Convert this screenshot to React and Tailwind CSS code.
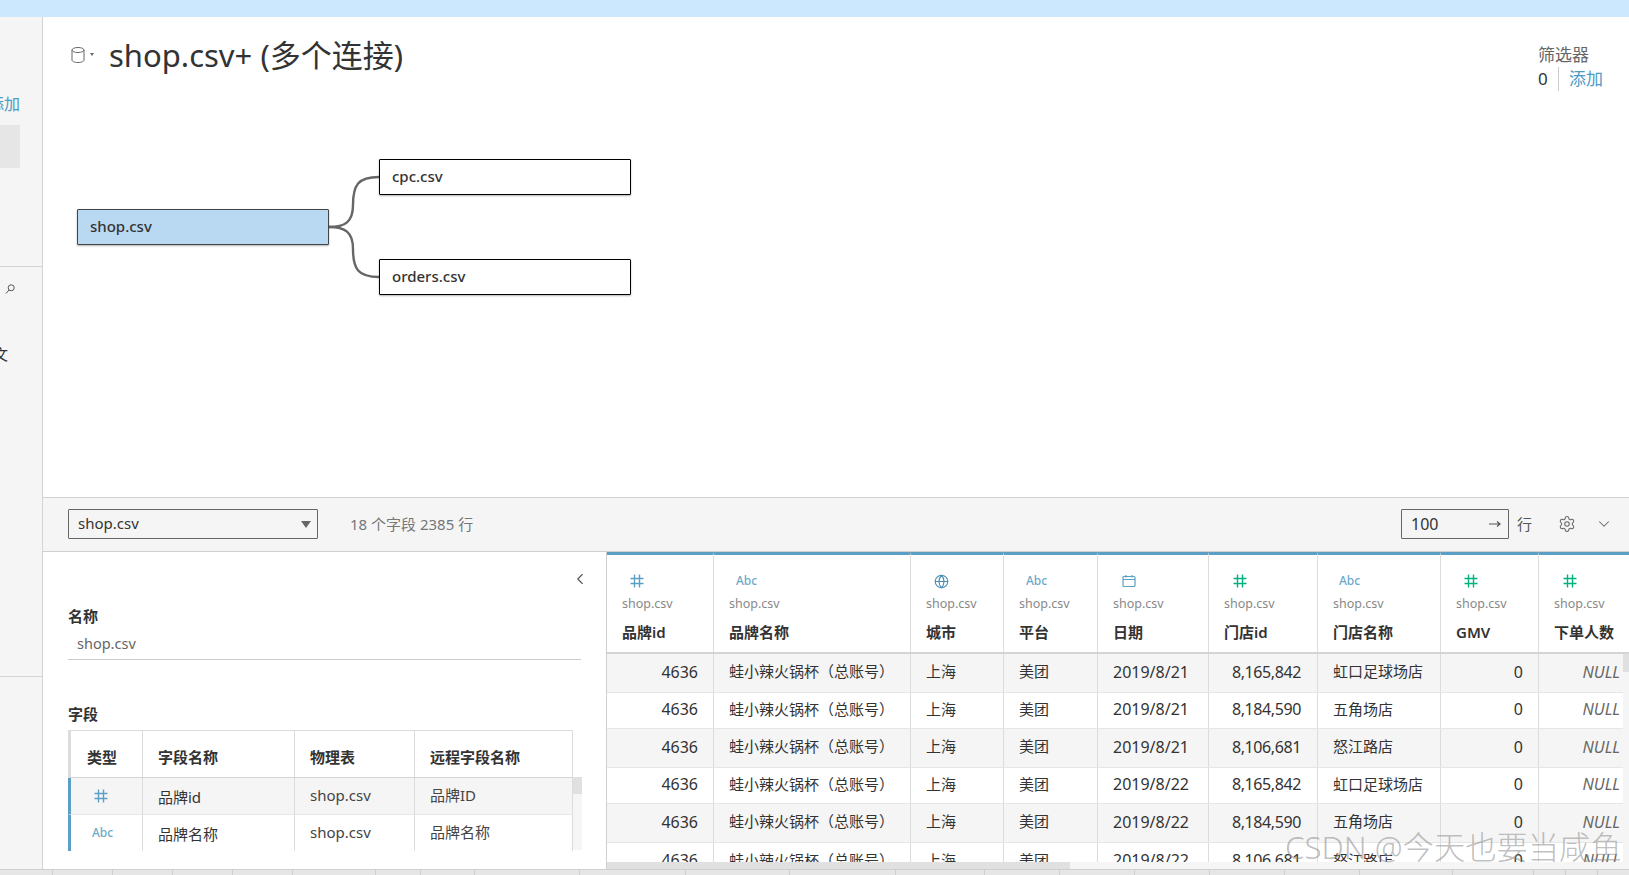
import { Globe, Settings, ChevronDown, ChevronLeft } from 'lucide-react';

const HashIcon = ({ className }) => (
  <svg viewBox="0 0 14 14" className={className} fill="none" stroke="currentColor" strokeWidth="1.4">
    <path d="M4.5 0.5v13M9.5 0.5v13M0.5 4.5h13M0.5 9.5h13" />
  </svg>
);

const CalendarIcon = ({ className }) => (
  <svg viewBox="0 0 14 14" className={className} fill="none" stroke="currentColor" strokeWidth="1.2">
    <rect x="1" y="2.5" width="12" height="10" rx="1" />
    <path d="M1 5.5h12M4 1v2.5M10 1v2.5" />
  </svg>
);

const AbcIcon = ({ className }) => <span className={className}>Abc</span>;

const columns = [
  { w: 'w-[107px]', name: '品牌id', icon: 'hash', color: 'text-[#5b9fc4]', iconPad: 'pl-[23px]', align: 'right', pad: 'pr-[15px]' },
  { w: 'w-[197px]', name: '品牌名称', icon: 'abc', color: 'text-[#5b9fc4]', iconPad: 'pl-[22px]' },
  { w: 'w-[93px]', name: '城市', icon: 'globe', color: 'text-[#4a8fb5]', iconPad: 'pl-[23px]' },
  { w: 'w-[94px]', name: '平台', icon: 'abc', color: 'text-[#5b9fc4]', iconPad: 'pl-[22px]' },
  { w: 'w-[111px]', name: '日期', icon: 'calendar', color: 'text-[#5b9fc4]', iconPad: 'pl-[24px]' },
  { w: 'w-[109px]', name: '门店id', icon: 'hash', color: 'text-[#00b180]', iconPad: 'pl-[24px]', align: 'right', pad: 'pr-[16px]' },
  { w: 'w-[123px]', name: '门店名称', icon: 'abc', color: 'text-[#5b9fc4]', iconPad: 'pl-[21px]' },
  { w: 'w-[98px]', name: 'GMV', icon: 'hash', color: 'text-[#00b180]', iconPad: 'pl-[23px]', align: 'right', pad: 'pr-[15px]' },
  { w: 'w-[84px]', name: '下单人数', icon: 'hash', color: 'text-[#00b180]', iconPad: 'pl-[24px]', align: 'right', pad: 'pr-[3px]' },
];

const rows = [
  { h: 'h-[39px]', bg: 'bg-[#f5f5f5]', date: '2019/8/21', id: '8,165,842', store: '虹口足球场店' },
  { h: 'h-[36px]', bg: 'bg-white', date: '2019/8/21', id: '8,184,590', store: '五角场店' },
  { h: 'h-[39px]', bg: 'bg-[#f5f5f5]', date: '2019/8/21', id: '8,106,681', store: '怒江路店' },
  { h: 'h-[36px]', bg: 'bg-white', date: '2019/8/22', id: '8,165,842', store: '虹口足球场店' },
  { h: 'h-[39px]', bg: 'bg-[#f5f5f5]', date: '2019/8/22', id: '8,184,590', store: '五角场店' },
  { h: 'h-[38px]', bg: 'bg-white', date: '2019/8/22', id: '8,106,681', store: '怒江路店' },
];

const bottomTabs = ['w-[53px]', 'w-[60px]', 'w-[60px]', 'w-[60px]', 'w-[60px]', 'w-[83px]', 'w-[45px]', 'w-[54px]', 'w-[105px]', 'w-[106px]', 'w-[104px]', 'w-[106px]', 'w-[89px]', 'w-[75px]', 'w-[75px]', 'w-[75px]', 'w-[75px]', 'w-[75px]', 'w-[93px]', 'w-[81px]', 'w-[32px]', 'w-[32px]', 'w-[32px]'];

const cjkCells = [1, 2, 3, 6];

const ColumnIcon = ({ type }) => {
  if (type === 'hash') return <HashIcon className="w-[14px] h-[14px]" />;
  if (type === 'globe') return <Globe className="w-[15px] h-[15px]" strokeWidth={1.8} />;
  if (type === 'calendar') return <CalendarIcon className="w-[14px] h-[14px]" />;
  return <AbcIcon className="text-[12px] leading-[14px] font-medium opacity-90" />;
};

const DataRow = ({ row }) => {
  const cells = ['4636', '蛙小辣火锅杯（总账号）', '上海', '美团', row.date, row.id, row.store, '0', 'NULL'];
  return (
    <div className={`flex shrink-0 border-b border-[#e6e6e6] ${row.h} ${row.bg}`}>
      {cells.map((text, i) => {
        const col = columns[i];
        const right = col.align === 'right';
        return (
          <div
            key={i}
            className={`${col.w} shrink-0 flex items-center pb-[3px] border-r border-[#dcdcdc] last:border-r-0 ${right ? `justify-end ${col.pad}` : 'pl-[15px]'} ${text === 'NULL' ? 'italic text-[#666]' : 'text-[#333]'} ${cjkCells.includes(i) ? 'text-[15px]' : 'text-[16px]'} ${i === 5 ? 'tracking-[-0.4px]' : ''} whitespace-nowrap`}
          >
            {text}
          </div>
        );
      })}
    </div>
  );
};

const Sidebar = () => (
  <div className="w-[43px] shrink-0 bg-[#f5f5f5] border-r border-[#d4d4d4] flex flex-col overflow-hidden">
    <div className="h-[250px] shrink-0 border-b border-[#d4d4d4]">
      <div className="w-[20px] mt-[75px] h-[24px] flex justify-end overflow-hidden">
        <span className="text-[16px] leading-[24px] text-[#4a9cc4] whitespace-nowrap">添加</span>
      </div>
      <div className="w-[20px] h-[43px] mt-[9px] bg-[#e6e6e6]" />
    </div>
    <div className="h-[410px] shrink-0 border-b border-[#d4d4d4]">
      <svg viewBox="0 0 10 10" className="w-[10px] h-[10px] ml-[5px] mt-[17px] text-[#555]" fill="none" stroke="currentColor" strokeWidth="1">
        <circle cx="6.2" cy="3.8" r="3" />
        <path d="M4 6l-3 3.5" />
      </svg>
      <div className="w-[8px] mt-[48px] h-[24px] flex justify-end overflow-hidden">
        <span className="text-[15px] leading-[24px] text-[#333] whitespace-nowrap">文</span>
      </div>
    </div>
  </div>
);

const Node = ({ className, children }) => (
  <div className={`absolute w-[252px] h-[36px] flex items-center pl-[12px] pb-[2px] text-[15px] font-medium text-[#333] border-[1.5px] shadow-[0_1px_2px_rgba(0,0,0,0.3)] rounded-[1px] ${className}`}>
    {children}
  </div>
);

const Canvas = () => (
  <div className="relative h-[480px] shrink-0 bg-white">
    <div className="absolute left-[28px] top-[29px] flex items-center text-[#666]">
      <svg viewBox="0 0 14 18" className="w-[14px] h-[18px]" fill="none" stroke="currentColor" strokeWidth="1">
        <path d="M1 4v10c0 1.5 2.5 2.5 6 2.5s6-1 6-2.5V4" />
        <ellipse cx="7" cy="4" rx="6" ry="2.5" />
      </svg>
      <svg viewBox="0 0 4 3" className="w-[4px] h-[3px] ml-[5px] -mt-[2px]" fill="currentColor">
        <path d="M0 0h4L2 3z" />
      </svg>
    </div>
    <h1 className="absolute left-[66px] top-[14px] text-[31px] leading-[48px] text-[#333] font-normal whitespace-nowrap">shop.csv+ (多个连接)</h1>

    <div className="absolute left-[1496px] top-[26px] -ml-[1px] text-[17px] leading-[24px] text-[#666]">
      <div>筛选器</div>
      <div className="flex items-center">
        <span className="text-[#333] w-[20px]">0</span>
        <span className="border-l border-[#ccc] pl-[10px] text-[#4a9cc4]">添加</span>
      </div>
    </div>

    <svg className="absolute left-[285px] top-[140px] w-[60px] h-[140px] text-[#666]" viewBox="0 0 60 140" fill="none" stroke="currentColor" strokeWidth="2.4">
      <path d="M1 70C17 70 25 65 25 48C25 28 30 20 51 20" />
      <path d="M1 70C17 70 25 75 25 92C25 112 30 120 51 120" />
    </svg>
    <Node className="left-[34px] top-[192px] bg-[#b9d8f2] border-[#444]">shop.csv</Node>
    <Node className="left-[336px] top-[142px] bg-white border-black">cpc.csv</Node>
    <Node className="left-[336px] top-[242px] bg-white border-black">orders.csv</Node>
  </div>
);

const Toolbar = () => (
  <div className="h-[55px] shrink-0 bg-[#f5f5f5] border-y border-[#cfcfcf] flex items-center pl-[25px] pr-[16px] pb-[1px] text-[15px]">
    <div className="w-[250px] h-[30px] border border-[#666] rounded-[1px] flex items-center justify-between pl-[9px] pr-[6px] pb-[2px] text-[#333]">
      shop.csv
      <svg viewBox="0 0 10 7" className="w-[10px] h-[7px] mt-[2px] text-[#666]" fill="currentColor">
        <path d="M0 0h10L5 7z" />
      </svg>
    </div>
    <span className="ml-[32px] text-[#777]">18 个字段 2385 行</span>
    <div className="ml-auto w-[108px] h-[30px] border border-[#666] rounded-[1px] flex items-center justify-between pl-[9px] pr-[7px] text-[16px] text-[#333]">
      100
      <svg viewBox="0 0 12 10" className="w-[12px] h-[10px] text-[#555]" fill="none" stroke="currentColor" strokeWidth="1.2">
        <path d="M0 5h11M8 2.5l3 2.5-3 2.5" />
      </svg>
    </div>
    <span className="ml-[8px] text-[#555]">行</span>
    <Settings className="ml-[26px] w-[18px] h-[18px] text-[#666]" strokeWidth={1.4} />
    <ChevronDown className="ml-[19px] w-[18px] h-[18px] text-[#666]" strokeWidth={1.4} />
  </div>
);

const fieldRows = [
  { bg: 'bg-[#f5f5f5]', h: 'h-[37px]', icon: 'hash', name: '品牌id', remote: '品牌ID', iconPad: 'pr-[11px]', line: 'border-b border-b-[#e6e6e6]' },
  { bg: 'bg-white', h: 'h-[36px]', icon: 'abc', name: '品牌名称', remote: '品牌名称', iconPad: 'pr-[8px]', line: '' },
];

const DetailsPanel = () => (
  <div className="w-[564px] shrink-0 bg-white border-r border-[#cfcfcf] pl-[25px] flex flex-col overflow-hidden">
    <div className="w-[514px] flex justify-end mt-[18px] h-[18px]">
      <ChevronLeft className="w-[18px] h-[18px] text-[#555] -mr-[7px]" strokeWidth={1.5} />
    </div>
    <div className="mt-[17px] text-[15px] leading-[22px] font-semibold text-[#333]">名称</div>
    <div className="w-[513px] h-[32px] mt-[1px] pl-[9px] border-b border-[#ccc] flex items-center text-[14.5px] text-[#666]">shop.csv</div>
    <div className="mt-[43px] text-[15px] leading-[22px] font-semibold text-[#333]">字段</div>

    <div className="flex mt-[5px] w-[514px]">
      <div className="w-[505px] border-t border-[#dcdcdc] text-[15px]">
        <div className="flex h-[47px] border-b border-[#d4d4d4] border-r border-r-[#dcdcdc] border-l-[3px] border-l-[#dcdcdc] font-semibold text-[#333]">
          <div className="w-[72px] pl-[16px] pt-[6px] border-r border-[#dcdcdc] flex items-center">类型</div>
          <div className="w-[152px] pl-[15px] pt-[6px] border-r border-[#dcdcdc] flex items-center">字段名称</div>
          <div className="w-[120px] pl-[15px] pt-[6px] border-r border-[#dcdcdc] flex items-center">物理表</div>
          <div className="flex-1 pl-[15px] pt-[6px] flex items-center">远程字段名称</div>
        </div>
        {fieldRows.map((row) => (
          <div key={row.name} className={`flex ${row.h} ${row.bg} border-l-[3px] border-l-[#5b9fc4] border-r border-r-[#dcdcdc] ${row.line} text-[#333]`}>
            <div className={`w-[72px] ${row.iconPad} border-r border-[#dcdcdc] flex items-center justify-center text-[#5b9fc4]`}>
              <ColumnIcon type={row.icon} />
            </div>
            <div className="w-[152px] pl-[15px] pt-[3px] border-r border-[#dcdcdc] flex items-center">{row.name}</div>
            <div className="w-[120px] pl-[15px] pb-[2px] border-r border-[#dcdcdc] flex items-center text-[#444]">shop.csv</div>
            <div className="flex-1 pl-[15px] pb-[2px] flex items-center text-[#444]">{row.remote}</div>
          </div>
        ))}
      </div>
      <div className="w-[9px] mt-[47px] h-[73px] bg-[#f5f5f5]">
        <div className="h-[17px] bg-[#e0e0e0]" />
      </div>
    </div>
  </div>
);

const DataGrid = () => (
  <div className="relative w-[1022px] bg-white flex flex-col overflow-hidden">
    <div className="flex h-[102px] shrink-0 border-b-2 border-[#d4d4d4]">
      {columns.map((col) => (
        <div key={col.name} className={`${col.w} last:flex-1 shrink-0 flex flex-col border-t-[3px] border-t-[#5b9fc4] border-r border-r-[#dcdcdc] last:border-r-0`}>
          <div className={`h-[14px] mt-[19px] flex items-center ${col.iconPad} ${col.color}`}>
            <ColumnIcon type={col.icon} />
          </div>
          <div className="mt-[6px] pl-[15px] text-[12.5px] leading-[20px] text-[#888]">shop.csv</div>
          <div className="mt-[7px] pl-[15px] text-[15px] leading-[22px] font-semibold text-[#333]">{col.name}</div>
        </div>
      ))}
    </div>
    <div className="flex flex-1 min-h-0">
      <div className="w-[1016px] flex flex-col overflow-hidden">
        {rows.map((row, i) => (
          <DataRow key={i} row={row} />
        ))}
      </div>
      <div className="w-[6px] bg-[#f5f5f5]">
        <div className="h-[18px] bg-[#e0e0e0]" />
      </div>
    </div>
    <div className="h-[7px] shrink-0 bg-[#f5f5f5]">
      <div className="h-full w-[463px] bg-[#e0e0e0]" />
    </div>
  </div>
);

export default function App() {
  return (
    <div className="relative w-[1629px] h-[875px] overflow-hidden bg-white flex flex-col font-['Noto_Sans','Noto_Sans_CJK_SC',sans-serif]">
      <div className="h-[17px] shrink-0 bg-[#cce8ff]" />
      <div className="flex h-[852px] shrink-0">
        <Sidebar />
        <div className="flex-1 min-w-0 flex flex-col">
          <Canvas />
          <Toolbar />
          <div className="flex h-[317px] shrink-0">
            <DetailsPanel />
            <DataGrid />
          </div>
        </div>
      </div>
      <div className="h-[6px] shrink-0 flex bg-[#e6e6e6] border-t border-[#cfcfcf]">
        {bottomTabs.map((w, i) => (
          <div key={i} className={`${w} shrink-0 border-r border-[#cfcfcf]`} />
        ))}
      </div>
      <div className="absolute left-[1285px] top-[825px] text-[31.3px] leading-[44px] font-light text-[#8a8a8a]/55 whitespace-nowrap">CSDN @今天也要当咸鱼</div>
    </div>
  );
}
